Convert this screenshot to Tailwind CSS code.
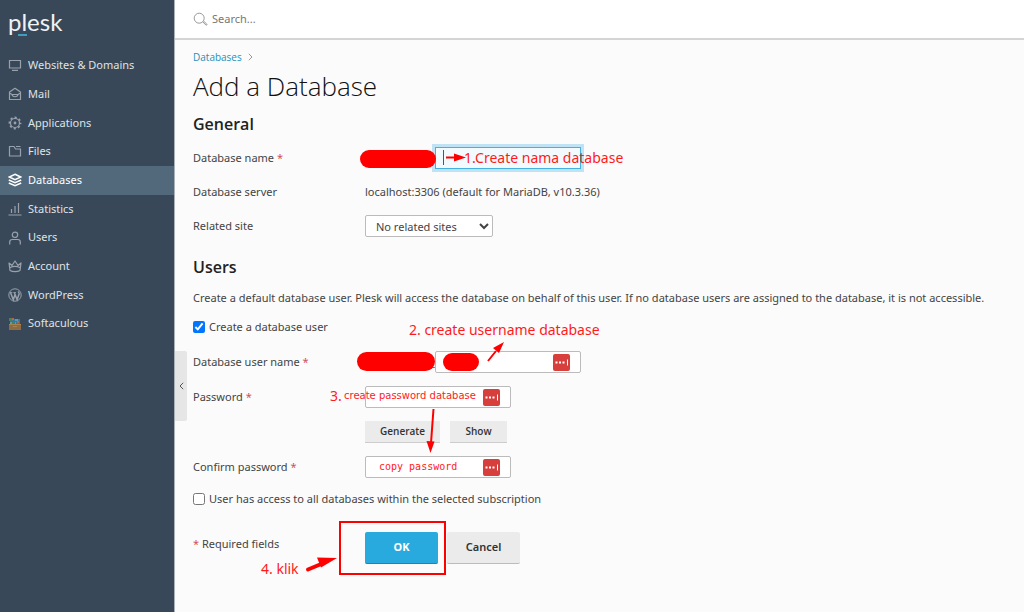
<!DOCTYPE html>
<html lang="en">
<head>
    <meta charset="UTF-8">
    <meta name="viewport" content="width=device-width, initial-scale=1.0">
    <title>Add a Database - Plesk</title>
    <script src="https://cdn.jsdelivr.net/npm/@tailwindcss/browser@4"></script>
</head>
<body class="relative flex min-h-screen bg-[#fbfbfb] font-['Noto_Sans','Open_Sans',sans-serif] text-[11px] text-[#444]">

    <!-- Sidebar -->
    <aside class="w-[175px] shrink-0 border-r border-[#a9b0b8] bg-[#394858] text-[#dfe3e7]">
        <a href="#" class="relative ml-2 mt-1.5 block h-[45px] w-14 font-['Lato',sans-serif] text-2xl leading-8 text-[#f0f2f4]">plesk
            <span class="absolute left-[10px] top-[28px] h-0.5 w-[9px] bg-[#3f9dbd]"></span>
        </a>
        <nav>
            <ul class="flex h-[287px] flex-col">
                <li class="flex-1"><a href="#" class="flex h-full items-center gap-1.5 pl-2">
                    <svg class="size-3.5 text-[#98a2ac]" viewBox="0 0 14 14" fill="none" stroke="currentColor" stroke-width="1.2"><path d="M1.500 2.500h11v7.500h-11zM4 12.400h6"/></svg>
                    Websites &amp; Domains</a></li>
                <li class="flex-1"><a href="#" class="flex h-full items-center gap-1.5 pl-2">
                    <svg class="size-3.5 text-[#98a2ac]" viewBox="0 0 14 14" fill="none" stroke="currentColor" stroke-width="1.2"><path d="M1.500 5 7 1.300 12.500 5v7.500h-11zM1.500 6 4 7.500c.5 3 5.500 3 6 0L12.500 6M4 7.500h6" stroke-linejoin="round"/></svg>
                    Mail</a></li>
                <li class="flex-1"><a href="#" class="flex h-full items-center gap-1.5 pl-2">
                    <svg class="size-3.5 text-[#98a2ac]" viewBox="0 0 14 14" fill="none" stroke="currentColor"><circle cx="7" cy="7" r="4.500" stroke-width="1.200"/><circle cx="7" cy="7" r="5.600" stroke-width="1.600" stroke-dasharray="2.200 2.198" stroke-dashoffset="1.100"/><circle cx="7" cy="7" r="1.400" fill="currentColor" stroke="none"/></svg>
                    Applications</a></li>
                <li class="flex-1"><a href="#" class="flex h-full items-center gap-1.5 pl-2">
                    <svg class="size-3.5 text-[#98a2ac]" viewBox="0 0 14 14" fill="none" stroke="currentColor" stroke-width="1.2"><path d="M1.500 2.500H6L7.500 5h5v7h-11zM8 2.500h4.500"/></svg>
                    Files</a></li>
                <li class="flex-1"><a href="#" class="flex h-full items-center gap-1.5 bg-[#52697b] pl-2 text-white">
                    <svg class="size-3.5" viewBox="0 0 14 14" fill="none" stroke="currentColor" stroke-width="1.500"><path d="M7 1.300 12.700 4 7 6.700 1.300 4zM.8 7 7 9.800 13.200 7M.8 10 7 12.800 13.200 10"/></svg>
                    Databases</a></li>
                <li class="flex-1"><a href="#" class="flex h-full items-center gap-1.5 pl-2">
                    <svg class="size-3.5 text-[#98a2ac]" viewBox="0 0 14 14" fill="none" stroke="currentColor" stroke-width="1.2"><path d="M.5 13h13M3.500 11V7M7 11V4M10.500 11V1"/></svg>
                    Statistics</a></li>
                <li class="flex-1"><a href="#" class="flex h-full items-center gap-1.5 pl-2">
                    <svg class="size-3.5 text-[#98a2ac]" viewBox="0 0 14 14" fill="none" stroke="currentColor" stroke-width="1.2"><circle cx="7" cy="3.800" r="2.700"/><path d="M1.700 13.500V11c0-1.500 1-2.500 2.500-2.500h5.600c1.500 0 2.500 1 2.500 2.500v2.500"/></svg>
                    Users</a></li>
                <li class="flex-1"><a href="#" class="flex h-full items-center gap-1.5 pl-2">
                    <svg class="size-3.5 text-[#98a2ac]" viewBox="0 0 14 14" fill="none" stroke="currentColor" stroke-width="1.2"><path d="M2 11.500 1 4l3 2.500L7 2l3 4.500L13 4l-1 7.500c-2.500 1.500-7.500 1.500-10 0zM1.700 8.800c3-1.500 7.600-1.500 10.600 0" stroke-linejoin="round"/></svg>
                    Account</a></li>
                <li class="flex-1"><a href="#" class="flex h-full items-center gap-1.5 pl-2">
                    <svg class="size-3.5 text-[#98a2ac]" viewBox="0 0 14 14" fill="none" stroke="currentColor"><circle cx="7" cy="7" r="6.200"/><path d="m2.500 4.500 2.800 7.200L7.200 6M6.300 4.500l2.800 7.200 2-5.700c.3-1-.8-1.500-.6-2.700" stroke-width="1.500"/><path d="M1.800 4.500h2.600M5.400 4.500H8" stroke-width=".8"/></svg>
                    WordPress</a></li>
                <li class="flex-1"><a href="#" class="flex h-full items-center gap-1.5 pl-2">
                    <svg class="size-3.5" viewBox="0 0 14 14"><path fill="#38769a" d="M2 2h10v6H2z"/><path fill="#4c8058" d="M1 1h3v3H1zM4 5h2v3H4z"/><path fill="#b9654a" d="M4 1h2v2H4zM9 4h2v2H9z"/><path fill="#5a9ab5" d="M7 2h3v2H7zM2 5h2v2H2zM7 5h1v3H7z"/><path fill="#8c6b45" d="M1 7h12v6H1z"/><path fill="#a5834f" d="M1 7h12v1H1zM5 9h4v1H5z"/></svg>
                    Softaculous</a></li>
            </ul>
        </nav>
    </aside>

    <div class="min-w-0 flex-1">
        <!-- Search bar -->
        <header class="flex h-10 items-center gap-1 border-b-2 border-[#d4d4d4] bg-white pl-[18px]">
            <svg class="size-[15px] text-[#999]" viewBox="0 0 15 15" fill="none" stroke="currentColor"><circle cx="6.200" cy="6.200" r="5"/><path d="m9.800 9.800 3 3.200c.7.600 1.600-.2 1-.9l-3.200-3"/></svg>
            <input type="search" aria-label="Search" placeholder="Search..." class="w-60 bg-transparent outline-none placeholder:text-[#777]">
        </header>

        <main class="pl-[18px] pr-4 pt-2">
            <nav class="flex h-[18px] items-center gap-1.5 font-['Open_Sans',sans-serif] text-[10px] text-[#2b8fb8]">
                <a href="#">Databases</a>
                <svg class="h-2 w-[5px] text-[#999]" viewBox="0 0 5 8" fill="none" stroke="currentColor"><path d="m.8.8 3.200 3.200-3.200 3.200"/></svg>
            </nav>
            <h1 class="font-['Open_Sans',sans-serif] text-[26px] font-light leading-10 text-[#111]">Add a Database</h1>

            <form>
                <h2 class="mt-1.5 font-['Open_Sans',sans-serif] text-base font-semibold leading-6 text-[#222]">General</h2>
                <div class="mt-[11px] flex flex-col gap-3">
                    <div class="flex h-[22px] items-center">
                        <label for="dbName" class="w-[172px] shrink-0">Database name <span class="text-[#d0505a]">*</span></label>
                        <span class="w-[70px] text-right">_</span>
                        <input id="dbName" type="text" class="h-[22px] w-[146px] border border-[#45b1e0] bg-[#f3fafe] px-2 outline-3 outline-[#bfe2f5]">
                    </div>
                    <div class="flex h-[22px] items-center">
                        <span class="w-[172px] shrink-0">Database server</span>
                        <span>localhost:3306 (default for MariaDB, v10.3.36)</span>
                    </div>
                    <div class="flex h-[22px] items-center">
                        <label for="site" class="w-[172px] shrink-0">Related site</label>
                        <select id="site" class="h-[22px] w-32 rounded-xs border border-[#bbb] bg-white pl-1.5">
                            <option>No related sites</option>
                        </select>
                    </div>
                </div>

                <h2 class="mt-[18px] font-['Open_Sans',sans-serif] text-base font-semibold leading-6 text-[#222]">Users</h2>
                <p class="mt-[9px] leading-5">Create a default database user. Plesk will access the database on behalf of this user. If no database users are assigned to the database, it is not accessible.</p>
                <label class="mt-[9px] flex items-center gap-1 leading-5"><input type="checkbox" checked class="size-3"> Create a database user</label>

                <div class="mt-[14px] flex flex-col gap-[13px]">
                    <div class="flex h-[22px] items-center">
                        <label for="userName" class="w-[172px] shrink-0">Database user name <span class="text-[#d0505a]">*</span></label>
                        <span class="w-[70px] text-right">_</span>
                        <div class="flex h-[22px] w-[146px] items-center rounded-xs border border-[#bbb] bg-white pr-2.5">
                            <input id="userName" type="text" class="min-w-0 flex-1 px-2 outline-none">
                            <svg class="size-[17px]" viewBox="0 0 17 17"><rect width="17" height="17" rx="2" fill="#d63f3c"/><path d="M2.500 7.500h2v2h-2zM6 7.500h2v2H6zM9.500 7.500h2v2h-2zM14 5.500h1v6h-1z" fill="#fff"/></svg>
                        </div>
                    </div>
                    <div class="flex h-[22px] items-center">
                        <label for="password" class="w-[172px] shrink-0">Password <span class="text-[#d0505a]">*</span></label>
                        <div class="flex h-[22px] w-[146px] items-center rounded-xs border border-[#bbb] bg-white pr-2.5">
                            <input id="password" type="password" class="min-w-0 flex-1 px-2 outline-none">
                            <svg class="size-[17px]" viewBox="0 0 17 17"><rect width="17" height="17" rx="2" fill="#d63f3c"/><path d="M2.500 7.500h2v2h-2zM6 7.500h2v2H6zM9.500 7.500h2v2h-2zM14 5.500h1v6h-1z" fill="#fff"/></svg>
                        </div>
                    </div>
                    <div class="flex h-[22px] items-center gap-2.5 pl-[172px] font-['Open_Sans',sans-serif] text-[10px] font-semibold text-[#333]">
                        <button type="button" class="h-[22px] w-[75px] border-b border-[#ccc] bg-[#ebebeb]">Generate</button>
                        <button type="button" class="h-[22px] w-[57px] border-b border-[#ccc] bg-[#ebebeb]">Show</button>
                    </div>
                    <div class="flex h-[22px] items-center">
                        <label for="confirm" class="w-[172px] shrink-0">Confirm password <span class="text-[#d0505a]">*</span></label>
                        <div class="flex h-[22px] w-[146px] items-center rounded-xs border border-[#bbb] bg-white pr-2.5">
                            <input id="confirm" type="password" class="min-w-0 flex-1 px-2 outline-none">
                            <svg class="size-[17px]" viewBox="0 0 17 17"><rect width="17" height="17" rx="2" fill="#d63f3c"/><path d="M2.500 7.500h2v2h-2zM6 7.500h2v2H6zM9.500 7.500h2v2h-2zM14 5.500h1v6h-1z" fill="#fff"/></svg>
                        </div>
                    </div>
                </div>
                <label class="mt-[11px] flex items-center gap-1 leading-5"><input type="checkbox" class="size-3"> User has access to all databases within the selected subscription</label>

                <div class="mt-[23px] flex">
                    <span class="w-[172px] leading-6"><span class="text-[#d0505a]">*</span> Required fields</span>
                    <button type="submit" class="h-8 w-[73px] rounded-xs border-b border-[#1c86b3] bg-[#28aade] font-bold text-white">OK</button>
                    <button type="button" class="ml-[9px] h-8 w-[73px] rounded-xs border-b border-[#bbb] bg-[#ebebeb] font-semibold text-[#333]">Cancel</button>
                </div>
            </form>
        </main>
    </div>

    <!-- Sidebar toggle -->
    <button type="button" aria-label="Collapse sidebar" class="absolute left-[175px] top-[351px] flex h-[70px] w-3 items-center justify-center rounded-r-xs bg-[#e6e6e6]">
        <svg class="h-2 w-[5px] text-[#555]" viewBox="0 0 5 8" fill="none" stroke="currentColor"><path d="M4.200.8 1 4l3.200 3.200"/></svg>
    </button>

    <!-- Tutorial marks -->
    <div class="pointer-events-none absolute left-0 top-0 whitespace-nowrap text-sm leading-5 text-[#ff1a1a]">
        <svg class="absolute left-0 top-0 max-w-none" width="1024" height="612" viewBox="0 0 1024 612" fill="#f00" stroke="#f00">
            <g stroke="none">
                <rect x="360" y="150" width="76" height="18" rx="9"/>
                <rect x="357" y="352" width="78" height="19" rx="9.500"/>
                <rect x="443" y="353" width="36" height="18" rx="9"/>
                <path d="m466 157.500-12-4v8zM504 342l-11 6 6 5zM430.500 453l-4-12 8 .5zM337 558l-20-.5 4 10z"/>
            </g>
            <path d="M446 157.500h10M488 361l8-10M433.500 409l-2.500 34" stroke-width="2"/>
            <path d="m308 569.500 12-5" stroke-width="4" stroke-linecap="round"/>
            <path d="M443.500 150v15" stroke="#555"/>
            <rect x="340" y="522" width="105" height="52" fill="none" stroke-width="2"/>
        </svg>
        <span class="absolute left-[464px] top-[148px]">1.Create nama database</span>
        <span class="absolute left-[409px] top-[320px]">2. create username database</span>
        <span class="absolute left-[330px] top-[386px]">3.</span>
        <span class="absolute left-[344px] top-[386px] font-['DejaVu_Sans',sans-serif] text-[10px]">create password database</span>
        <span class="absolute left-[379px] top-[457px] font-['DejaVu_Sans_Mono',monospace] text-[10px]">copy password</span>
        <span class="absolute left-[261px] top-[559px]">4. klik</span>
    </div>
</body>
</html>
